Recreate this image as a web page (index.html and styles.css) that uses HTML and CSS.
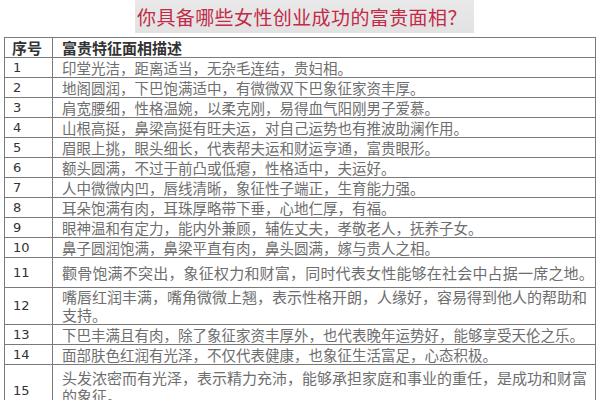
FILE: index.html
```html
<!DOCTYPE html>
<html lang="zh">
<head>
<meta charset="utf-8">
<link rel="stylesheet" href="styles.css">
</head>
<body>
<div class="title-bar"><h1 class="title">你具备哪些女性创业成功的富贵面相？</h1></div>
<table class="face-table">
  <colgroup><col class="c-num"><col class="c-desc"></colgroup>
  <tr class="head"><th>序号</th><th>富贵特征面相描述</th></tr>
  <tr><td class="num">1</td><td>印堂光洁，距离适当，无杂毛连结，贵妇相。</td></tr>
  <tr><td class="num">2</td><td>地阁圆润，下巴饱满适中，有微微双下巴象征家资丰厚。</td></tr>
  <tr><td class="num">3</td><td>肩宽腰细，性格温婉，以柔克刚，易得血气阳刚男子爱慕。</td></tr>
  <tr><td class="num">4</td><td>山根高挺，鼻梁高挺有旺夫运，对自己运势也有推波助澜作用。</td></tr>
  <tr><td class="num">5</td><td>眉眼上挑，眼头细长，代表帮夫运和财运亨通，富贵眼形。</td></tr>
  <tr><td class="num">6</td><td>额头圆满，不过于前凸或低瘪，性格适中，夫运好。</td></tr>
  <tr><td class="num">7</td><td>人中微微内凹，唇线清晰，象征性子端正，生育能力强。</td></tr>
  <tr><td class="num">8</td><td>耳朵饱满有肉，耳珠厚略带下垂，心地仁厚，有福。</td></tr>
  <tr><td class="num">9</td><td>眼神温和有定力，能内外兼顾，辅佐丈夫，孝敬老人，抚养子女。</td></tr>
  <tr><td class="num">10</td><td>鼻子圆润饱满，鼻梁平直有肉，鼻头圆满，嫁与贵人之相。</td></tr>
  <tr class="r11"><td class="num">11</td><td>颧骨饱满不突出，象征权力和财富，同时代表女性能够在社会中占据一席之地。</td></tr>
  <tr class="r12"><td class="num">12</td><td>嘴唇红润丰满，嘴角微微上翘，表示性格开朗，人缘好，容易得到他人的帮助和<br>支持。</td></tr>
  <tr><td class="num">13</td><td>下巴丰满且有肉，除了象征家资丰厚外，也代表晚年运势好，能够享受天伦之乐。</td></tr>
  <tr><td class="num">14</td><td>面部肤色红润有光泽，不仅代表健康，也象征生活富足，心态积极。</td></tr>
  <tr class="r15"><td class="num">15</td><td>头发浓密而有光泽，表示精力充沛，能够承担家庭和事业的重任，是成功和财富<br>的象征。</td></tr>
</table>
</body>
</html>
```

FILE: styles.css
```css
html, body {
  margin: 0;
  padding: 0;
  background: #ffffff;
}
body {
  width: 600px;
  height: 400px;
  overflow: hidden;
  font-family: "Noto Sans CJK SC", sans-serif;
}
.title-bar {
  margin-left: 135px;
  width: 339px;
  height: 33px;
  background: linear-gradient(#e9e9e9, #e2e2e2);
  display: flex;
  align-items: center;
}
.title {
  margin: 0 0 0 2px;
  font-size: 19px;
  font-weight: 400;
  color: #c22a48;
  line-height: 24px;
  letter-spacing: 0.4px;
  white-space: nowrap;
}
.face-table {
  margin: 4px 0 0 4px;
  width: 592px;
  border-collapse: collapse;
  table-layout: fixed;
  font-size: 14.5px;
  color: #6e6e6e;
}
.c-num { width: 48px; }
.face-table th,
.face-table td {
  border: 1.5px solid #7a7a7a;
  padding: 0 0 0 9px;
  height: 19px;
  line-height: 18px;
  text-align: left;
  vertical-align: middle;
  white-space: nowrap;
}
.face-table th {
  color: #333;
  font-weight: 700;
  font-size: 15px;
}
.face-table th:first-child {
  padding-left: 7px;
}
.face-table td.num {
  font-family: "DejaVu Sans", sans-serif;
  font-size: 13px;
  color: #333;
  padding-left: 8px;
}
.r11 td { height: 29px; font-size: 15px; letter-spacing: 0.2px; }
.r11 td.num { letter-spacing: 0; font-size: 13px; }
.r12 td { height: 36px; font-size: 15px; }
.r12 td.num { font-size: 13px; }
.r15 td { height: 40px; font-size: 15px; vertical-align: top; padding-top: 4px; }
.r15 td.num { font-size: 13px; vertical-align: middle; padding-top: 6px; }
```
